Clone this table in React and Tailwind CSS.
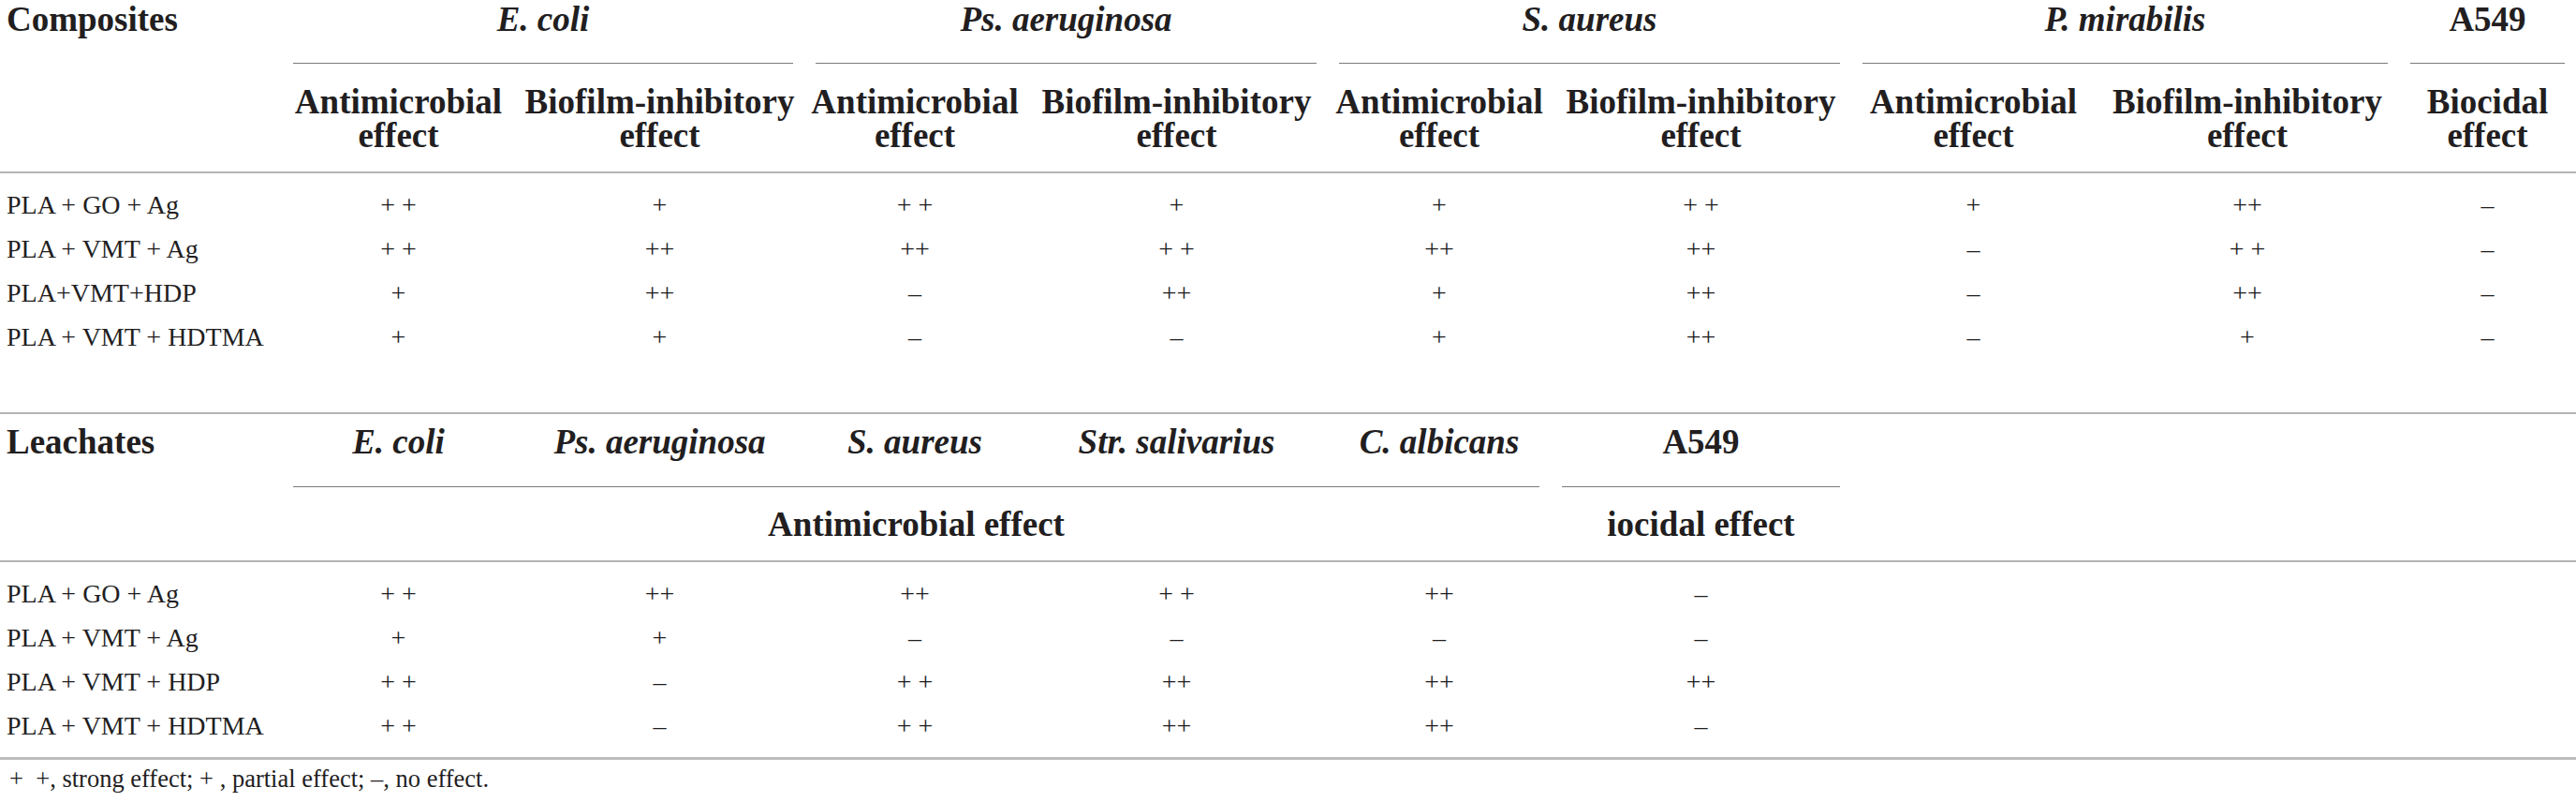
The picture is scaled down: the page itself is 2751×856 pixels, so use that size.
const cols =
  "grid grid-cols-[301px_249px_309px_236px_323px_238px_321px_261px_324px_189px]";

const compositeGroups = ["E. coli", "Ps. aeruginosa", "S. aureus", "P. mirabilis"];

const compositeRows = [
  ["PLA + GO + Ag", ["+ +", "+", "+ +", "+", "+", "+ +", "+", "++", "–"]],
  ["PLA + VMT + Ag", ["+ +", "++", "++", "+ +", "++", "++", "–", "+ +", "–"]],
  ["PLA+VMT+HDP", ["+", "++", "–", "++", "+", "++", "–", "++", "–"]],
  ["PLA + VMT + HDTMA", ["+", "+", "–", "–", "+", "++", "–", "+", "–"]],
];

const leachateSpecies = ["E. coli", "Ps. aeruginosa", "S. aureus", "Str. salivarius", "C. albicans"];

const leachateRows = [
  ["PLA + GO + Ag", ["+ +", "++", "++", "+ +", "++", "–"]],
  ["PLA + VMT + Ag", ["+", "+", "–", "–", "–", "–"]],
  ["PLA + VMT + HDP", ["+ +", "–", "+ +", "++", "++", "++"]],
  ["PLA + VMT + HDTMA", ["+ +", "–", "+ +", "++", "++", "–"]],
];

// two-line bold header, centred even when a word is wider than the cell
const SubHead = ({ first, second }) => (
  <div className="flex flex-col items-center px-3 whitespace-nowrap">
    <span>{first}</span>
    <span>{second}</span>
  </div>
);

const DataRow = ({ label, values }) => (
  <div className={cols + " text-[28px] leading-[47px]"}>
    <div className="pl-[7px] whitespace-nowrap">{label}</div>
    {values.map((v, i) => (
      <div key={i} className="text-center whitespace-pre">
        {v}
      </div>
    ))}
  </div>
);

export default function App() {
  return (
    <div className="w-[2751px] h-[856px] bg-white text-[#221e1f] font-['Liberation_Serif',serif] overflow-hidden">
      {/* Composites header */}
      <div className={cols + " pt-[2px] text-[37px] leading-[38px] font-bold"}>
        <div className="pl-[7px]">Composites</div>
        {compositeGroups.map((g) => (
          <div key={g} className="col-span-2 px-3">
            <div className="text-center italic pb-[27px] border-b border-[#7a7a7a]">{g}</div>
          </div>
        ))}
        <div className="px-3">
          <div className="text-center pb-[27px] border-b border-[#7a7a7a]">A549</div>
        </div>
      </div>

      <div className={cols + " pt-[23px] pb-[20px] text-[37px] leading-[36px] font-bold"}>
        <div />
        {compositeGroups.map((g) => [
          <SubHead key={g + "a"} first="Antimicrobial" second="effect" />,
          <SubHead key={g + "b"} first="Biofilm-inhibitory" second="effect" />,
        ])}
        <SubHead first="Biocidal" second="effect" />
      </div>
      <div className="h-[2px] bg-[#b4b4b4]" />

      <div className="pt-[10px]">
        {compositeRows.map(([label, values]) => (
          <DataRow key={label} label={label} values={values} />
        ))}
      </div>
      <div className="h-[57px]" />
      <div className="h-[2px] bg-[#b4b4b4]" />

      {/* Leachates header */}
      <div className={cols + " pt-[11px] pb-[28px] text-[37px] leading-[38px] font-bold"}>
        <div className="pl-[7px]">Leachates</div>
        {leachateSpecies.map((s) => (
          <div key={s} className="text-center italic whitespace-nowrap">
            {s}
          </div>
        ))}
        <div className="text-center">A549</div>
      </div>
      <div className={cols + " h-px"}>
        <div className="col-start-2 col-span-5 mx-3 bg-[#7a7a7a]" />
        <div className="mx-3 bg-[#7a7a7a]" />
      </div>

      <div className={cols + " pt-[22px] pb-[20px] text-[37px] leading-[36px] font-bold"}>
        <div />
        <div className="col-span-5 text-center whitespace-nowrap">Antimicrobial effect</div>
        <div className="text-center whitespace-nowrap">iocidal effect</div>
      </div>
      <div className="h-[2px] bg-[#b4b4b4]" />

      <div className="py-[10px]">
        {leachateRows.map(([label, values]) => (
          <DataRow key={label} label={label} values={values} />
        ))}
      </div>
      <div className="h-[3px] bg-[#bdbdbd]" />

      <div className="pt-[5px] pl-[10px] text-[26.5px] leading-[30px] whitespace-pre">
        {"+  +, strong effect; + , partial effect; –, no effect."}
      </div>
    </div>
  );
}
